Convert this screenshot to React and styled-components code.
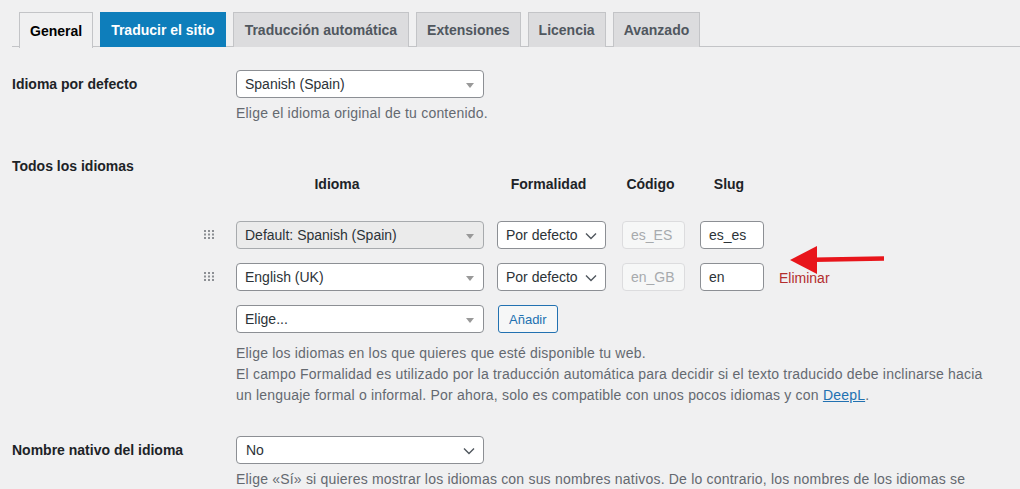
import React from "react";
import styled, { createGlobalStyle } from "styled-components";

const Global = createGlobalStyle`
  html, body { margin: 0; padding: 0; background: #f0f0f1; }
  body {
    font-family: "Liberation Sans", Arial, sans-serif;
    font-size: 14px;
    color: #1d2327;
    overflow: hidden;
  }
`;

const Page = styled.div`
  padding: 12px 0 0 12px;
`;

const TabBar = styled.nav`
  display: flex;
  border-bottom: 1px solid #c3c4c7;
  height: 35px;
  box-sizing: border-box;
`;

const Tab = styled.a`
  display: flex;
  align-items: center;
  box-sizing: border-box;
  height: 35px;
  margin-left: 7px;
  padding: 0 ${(p) => p.$padX ?? 10}px;
  font-size: 14px;
  font-weight: 700;
  text-decoration: none;
  border: 1px solid ${(p) => (p.$highlight ? "#0e7ebb" : "#c3c4c7")};
  border-bottom: none;
  background: ${(p) => (p.$active ? "#f0f0f1" : p.$highlight ? "#0e7ebb" : "#dcdcde")};
  color: ${(p) => (p.$active ? "#000" : p.$highlight ? "#fff" : "#50575e")};
  ${(p) => (p.$active ? "height: 36px; margin-bottom: -1px;" : "")}
`;

const Form = styled.div`
  padding-top: 23px;
`;

const Row = styled.div`
  display: grid;
  grid-template-columns: 224px 764px;
  margin-bottom: ${(p) => p.$gap ?? 28}px;
`;

const Label = styled.div`
  font-weight: 700;
  line-height: 28px;
  color: #1d2327;
`;

const Field = styled.div`
  display: flex;
  flex-direction: column;
  align-items: flex-start;
`;

const Description = styled.p`
  margin: ${(p) => p.$top ?? 5}px 0 0;
  line-height: 21px;
  color: #646970;
  font-size: 14px;
  letter-spacing: 0.2px;
  a {
    color: #2271b1;
    text-decoration: underline;
  }
`;

const SelectBox = styled.div`
  position: relative;
  box-sizing: border-box;
  width: ${(p) => p.$w}px;
  height: 28px;
  display: flex;
  align-items: center;
  padding-left: ${(p) => p.$pad ?? 8}px;
  border: 1px solid ${(p) => (p.$disabled ? "#a7aaad" : "#8c8f94")};
  border-radius: 4px;
  background: ${(p) => (p.$disabled ? "#ebebeb" : "#fff")};
  color: #2c3338;
  font-size: 14px;
  white-space: nowrap;
`;

const Triangle = styled.span`
  position: absolute;
  right: 9px;
  top: 12px;
  width: 0;
  height: 0;
  border-style: solid;
  border-width: 5px 4px 0 4px;
  border-color: #999 transparent transparent transparent;
`;

const Chevron = styled.svg`
  position: absolute;
  right: ${(p) => p.$right ?? 8}px;
  top: 10px;
`;

const TextInput = styled.div`
  box-sizing: border-box;
  width: ${(p) => p.$w}px;
  height: 28px;
  display: flex;
  align-items: center;
  padding-left: 8px;
  border: 1px solid ${(p) => (p.$disabled ? "#dcdcde" : "#8c8f94")};
  border-radius: 4px;
  background: ${(p) => (p.$disabled ? "#f6f7f7" : "#fff")};
  color: ${(p) => (p.$disabled ? "#a7aaad" : "#2c3338")};
  font-size: 14px;
`;

const LangTable = styled.div`
  position: relative;
  margin-left: -40px;
  margin-top: 22px;
  display: grid;
  grid-template-columns: 40px 261px 125px 78px 79px auto;
  grid-template-rows: auto;
  grid-auto-rows: 28px;
  row-gap: 14px;
  align-items: center;
`;

const HeaderRow = styled.div`
  display: contents;
`;

const HeadCell = styled.div`
  grid-column: ${(p) => p.$span ?? "auto"};
  width: ${(p) => p.$w}px;
  box-sizing: border-box;
  padding-right: 6px;
  text-align: center;
  font-weight: 700;
  line-height: 20px;
  align-self: start;
  margin-bottom: 13px;
  color: #1d2327;
`;

const HeadSpacer = styled.div``;

const Handle = styled.svg`
  margin-left: 8px;
`;

const Remove = styled.a`
  color: #b32d2e;
  font-size: 14px;
  text-decoration: none;
  margin-top: 1px;
`;

const AddButton = styled.button`
  box-sizing: border-box;
  height: 28px;
  padding: 0 10px;
  margin-left: 1px;
  border: 1px solid #2271b1;
  border-radius: 3px;
  background: #f6f7f7;
  color: #2271b1;
  font-family: inherit;
  font-size: 13px;
`;

const Arrow = styled.svg`
  position: absolute;
  left: 592px;
  top: 70px;
`;

const Empty = styled.span``;

function DragHandle() {
  const dots = [];
  for (let r = 0; r < 3; r++)
    for (let c = 0; c < 3; c++)
      dots.push(<rect key={`${r}-${c}`} x={c * 4} y={r * 3.5} width="2" height="2" fill="#8c8f94" />);
  return (
    <Handle width="10" height="10" viewBox="0 0 10 10">
      {dots}
    </Handle>
  );
}

function ChevronIcon({ right }) {
  return (
    <Chevron $right={right} width="12" height="8" viewBox="0 0 12 8">
      <path d="M1 1.5 L6 6.5 L11 1.5" fill="none" stroke="#50575e" strokeWidth="1.4" />
    </Chevron>
  );
}

export default function App() {
  return (
    <>
      <Global />
      <Page>
        <TabBar>
          <Tab $active>General</Tab>
          <Tab $highlight>Traducir el sitio</Tab>
          <Tab $padX={11}>Traducción automática</Tab>
          <Tab $padX={10}>Extensiones</Tab>
          <Tab>Licencia</Tab>
          <Tab>Avanzado</Tab>
        </TabBar>

        <Form>
          <Row>
            <Label>Idioma por defecto</Label>
            <Field>
              <SelectBox $w={248}>
                Spanish (Spain)
                <Triangle />
              </SelectBox>
              <Description>Elige el idioma original de tu contenido.</Description>
            </Field>
          </Row>

          <Row $gap={30}>
            <Label>Todos los idiomas</Label>
            <Field>
              <LangTable>
                <HeaderRow>
                  <HeadCell $span="1 / span 2" $w={288}>Idioma</HeadCell>
                  <HeadCell $w={109}>Formalidad</HeadCell>
                  <HeadCell $w={63}>Código</HeadCell>
                  <HeadCell $w={64}>Slug</HeadCell>
                  <HeadSpacer />
                </HeaderRow>

                <DragHandle />
                <SelectBox $w={248} $disabled>
                  Default: Spanish (Spain)
                  <Triangle />
                </SelectBox>
                <SelectBox $w={109}>
                  Por defecto
                  <ChevronIcon right={8} />
                </SelectBox>
                <TextInput $w={63} $disabled>es_ES</TextInput>
                <TextInput $w={64}>es_es</TextInput>
                <Empty />

                <DragHandle />
                <SelectBox $w={248}>
                  English (UK)
                  <Triangle />
                </SelectBox>
                <SelectBox $w={109}>
                  Por defecto
                  <ChevronIcon right={8} />
                </SelectBox>
                <TextInput $w={63} $disabled>en_GB</TextInput>
                <TextInput $w={64}>en</TextInput>
                <Remove>Eliminar</Remove>

                <Empty />
                <SelectBox $w={248}>
                  Elige...
                  <Triangle />
                </SelectBox>
                <div>
                  <AddButton>Añadir</AddButton>
                </div>

                <Arrow width="98" height="32" viewBox="0 0 98 32">
                  <polygon points="2,16 29,2 29,30" fill="#e8151b" />
                  <line x1="26" y1="15.8" x2="96" y2="14.6" stroke="#e8151b" strokeWidth="4.5" />
                </Arrow>
              </LangTable>
              <Description $top={10}>
                Elige los idiomas en los que quieres que esté disponible tu web.
                <br />
                El campo Formalidad es utilizado por la traducción automática para decidir si el texto traducido debe inclinarse hacia un lenguaje formal o informal. Por ahora, solo es compatible con unos pocos idiomas y con <a>DeepL</a>.
              </Description>
            </Field>
          </Row>

          <Row>
            <Label>Nombre nativo del idioma</Label>
            <Field>
              <SelectBox $w={248} $pad={9}>
                No
                <ChevronIcon right={8} />
              </SelectBox>
              <Description>
                Elige «Sí» si quieres mostrar los idiomas con sus nombres nativos. De lo contrario, los nombres de los idiomas se mostrarán en el idioma del sitio.
              </Description>
            </Field>
          </Row>
        </Form>
      </Page>
    </>
  );
}
